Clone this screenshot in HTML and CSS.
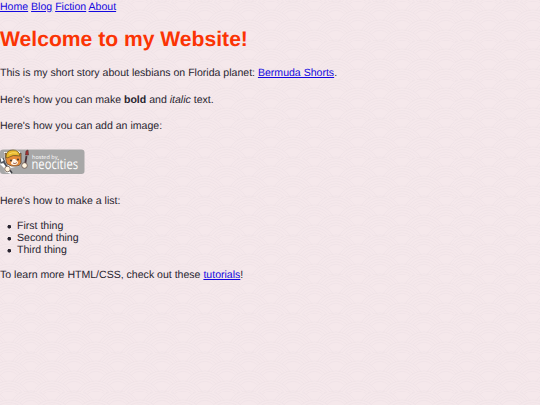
FILE: index.html
```
<!DOCTYPE html>
<html lang="en">
<head>
    <meta charset="UTF-8">
    <meta name="viewport" content="width=device-width, initial-scale=1.0">
    <title>My Website</title>
    <link rel="stylesheet" href="styles.css">
</head>
<body>
    <nav>
        <a href="#">Home</a>
        <a href="#">Blog</a>
        <a href="#">Fiction</a>
        <a href="#">About</a>
    </nav>

    <h1>Welcome to my Website!</h1>

    <p>This is my short story about lesbians on Florida planet: <a href="#">Bermuda Shorts</a>.</p>

    <p>Here's how you can make <strong>bold</strong> and <em>italic</em> text.</p>

    <p>Here's how you can add an image:</p>

    <svg class="badge" viewBox="0 0 85 26">
        <rect class="badge-bg" x="0" y="0.5" width="84.5" height="24.5" rx="3"/>
        <!-- cat -->
        <path d="M5 10 L4 3 L9 3 Q14 -1 20 3 L21 10 L19 17 L11 19 L11 25 L5 23 L4 19 L0 15 L1 9Z" fill="#fff"/>
        <path d="M6 12 L5 4 L9 6 L18 6 L21 4 L21 11 Q22 16 17 17 Q11 18 7 15Z" fill="#e68c3a" stroke="#59402e" stroke-width=".8"/>
        <path d="M13 10 L15 10 L18 13 Q18 15.5 15 16 Q11 16 11 14Z" fill="#fff5e8"/>
        <path d="M6 8 Q6 1 13 1 Q19 1 20 7 Q13 5 7 9Z" fill="#e8b82e" stroke="#705b25" stroke-width=".8"/>
        <path d="M9 5 Q12 3 17 4" fill="none" stroke="#f8dc68"/>
        <circle cx="11" cy="11.5" r=".9" fill="#332c2c"/>
        <circle cx="18" cy="10.5" r=".9" fill="#332c2c"/>
        <path d="M13 14 Q15 15.5 17 13.5" fill="none" stroke="#8a4936" stroke-width=".8"/>
        <!-- tools -->
        <path d="M3 12 L8 19" stroke="#4b5058" stroke-width="2"/>
        <path d="M0 10 L1 14 L5 13 L3 9" fill="none" stroke="#555b62" stroke-width="1.3"/>
        <path d="M26.5 7 L25 16" stroke="#49343a" stroke-width="1.8"/>
        <path d="M25.5 6 L26 2 L28 1 L28.5 6Z" fill="#a62e32" stroke="#50302c" stroke-width=".6"/>
        <path d="M9 20 L12 24" stroke="#3c3c42" stroke-width="1.6"/>
        <circle cx="7.5" cy="20" r="2.8" fill="#fff4df" stroke="#665247" stroke-width=".8"/>
        <circle cx="24.5" cy="16.5" r="2.8" fill="#fff4df" stroke="#665247" stroke-width=".8"/>
        <text class="badge-small" x="32" y="9.5" textLength="25.5">hosted by</text>
        <text class="badge-name" x="31.5" y="20" textLength="46.5" lengthAdjust="spacingAndGlyphs">neocities</text>
    </svg>

    <p>Here's how to make a list:</p>

    <ul>
        <li>First thing</li>
        <li>Second thing</li>
        <li>Third thing</li>
    </ul>

    <p>To learn more HTML/CSS, check out these <a href="#">tutorials</a>!</p>
</body>
</html>
```

FILE: styles.css
```
body {
    margin: 0;
    background-color: #f5e8eb;
    /* overlapping wave arcs */
    background-image: url("data:image/svg+xml,%3Csvg xmlns='http://www.w3.org/2000/svg' width='43.7' height='19.5' viewBox='0 0 43.7 19.5'%3E%3Cdefs%3E%3Cg id='w' fill='%23f5e8eb' stroke='%23eee2e5' stroke-width='.7'%3E%3Ccircle r='22'/%3E%3Ccircle r='19.5'/%3E%3Ccircle r='17'/%3E%3Ccircle r='14.5'/%3E%3Ccircle r='12'/%3E%3C/g%3E%3C/defs%3E%3Cuse href='%23w' x='0' y='2.5'/%3E%3Cuse href='%23w' x='43.7' y='2.5'/%3E%3Cuse href='%23w' x='21.85' y='12.25'/%3E%3Cuse href='%23w' x='0' y='22'/%3E%3Cuse href='%23w' x='43.7' y='22'/%3E%3Cuse href='%23w' x='21.85' y='31.75'/%3E%3Cuse href='%23w' x='0' y='41.5'/%3E%3Cuse href='%23w' x='43.7' y='41.5'/%3E%3C/svg%3E");
    background-position: 8.7px 10.3px;
    background-size: 43.7px 19.5px;
    color: #28242f;
    font-family: "Liberation Sans", Arial, sans-serif;
    font-size: 10.56px;
    line-height: 12.25px;
    text-rendering: geometricPrecision;
}
nav {
    padding-top: 0.5px;
}
a {
    color: #1408df;
}
h1 {
    color: #fb3404;
    font-size: 21.12px;
    line-height: 25px;
    margin: 14.5px 0 15px;
}
p {
    margin: 14.2px 0;
}
.badge {
    display: block;
    width: 85px;
    height: 26px;
    margin: 16.3px 0 20.4px;
    overflow: visible;
}
.badge-bg {
    fill: #a7a7a7;
}
.badge-small, .badge-name {
    fill: #fff;
    font-family: "Open Sans", sans-serif;
}
.badge-small {
    font-size: 5.5px;
}
.badge-name {
    font-size: 14px;
}
ul {
    list-style: none;
    margin: -1.7px 0 12px;
    padding: 0;
}
li {
    padding-left: 17px;
    background: radial-gradient(circle at 9.3px 6.7px, #28242f 1.5px, transparent 2.2px);
}
ul + p {
    margin-top: 12px;
}
```
